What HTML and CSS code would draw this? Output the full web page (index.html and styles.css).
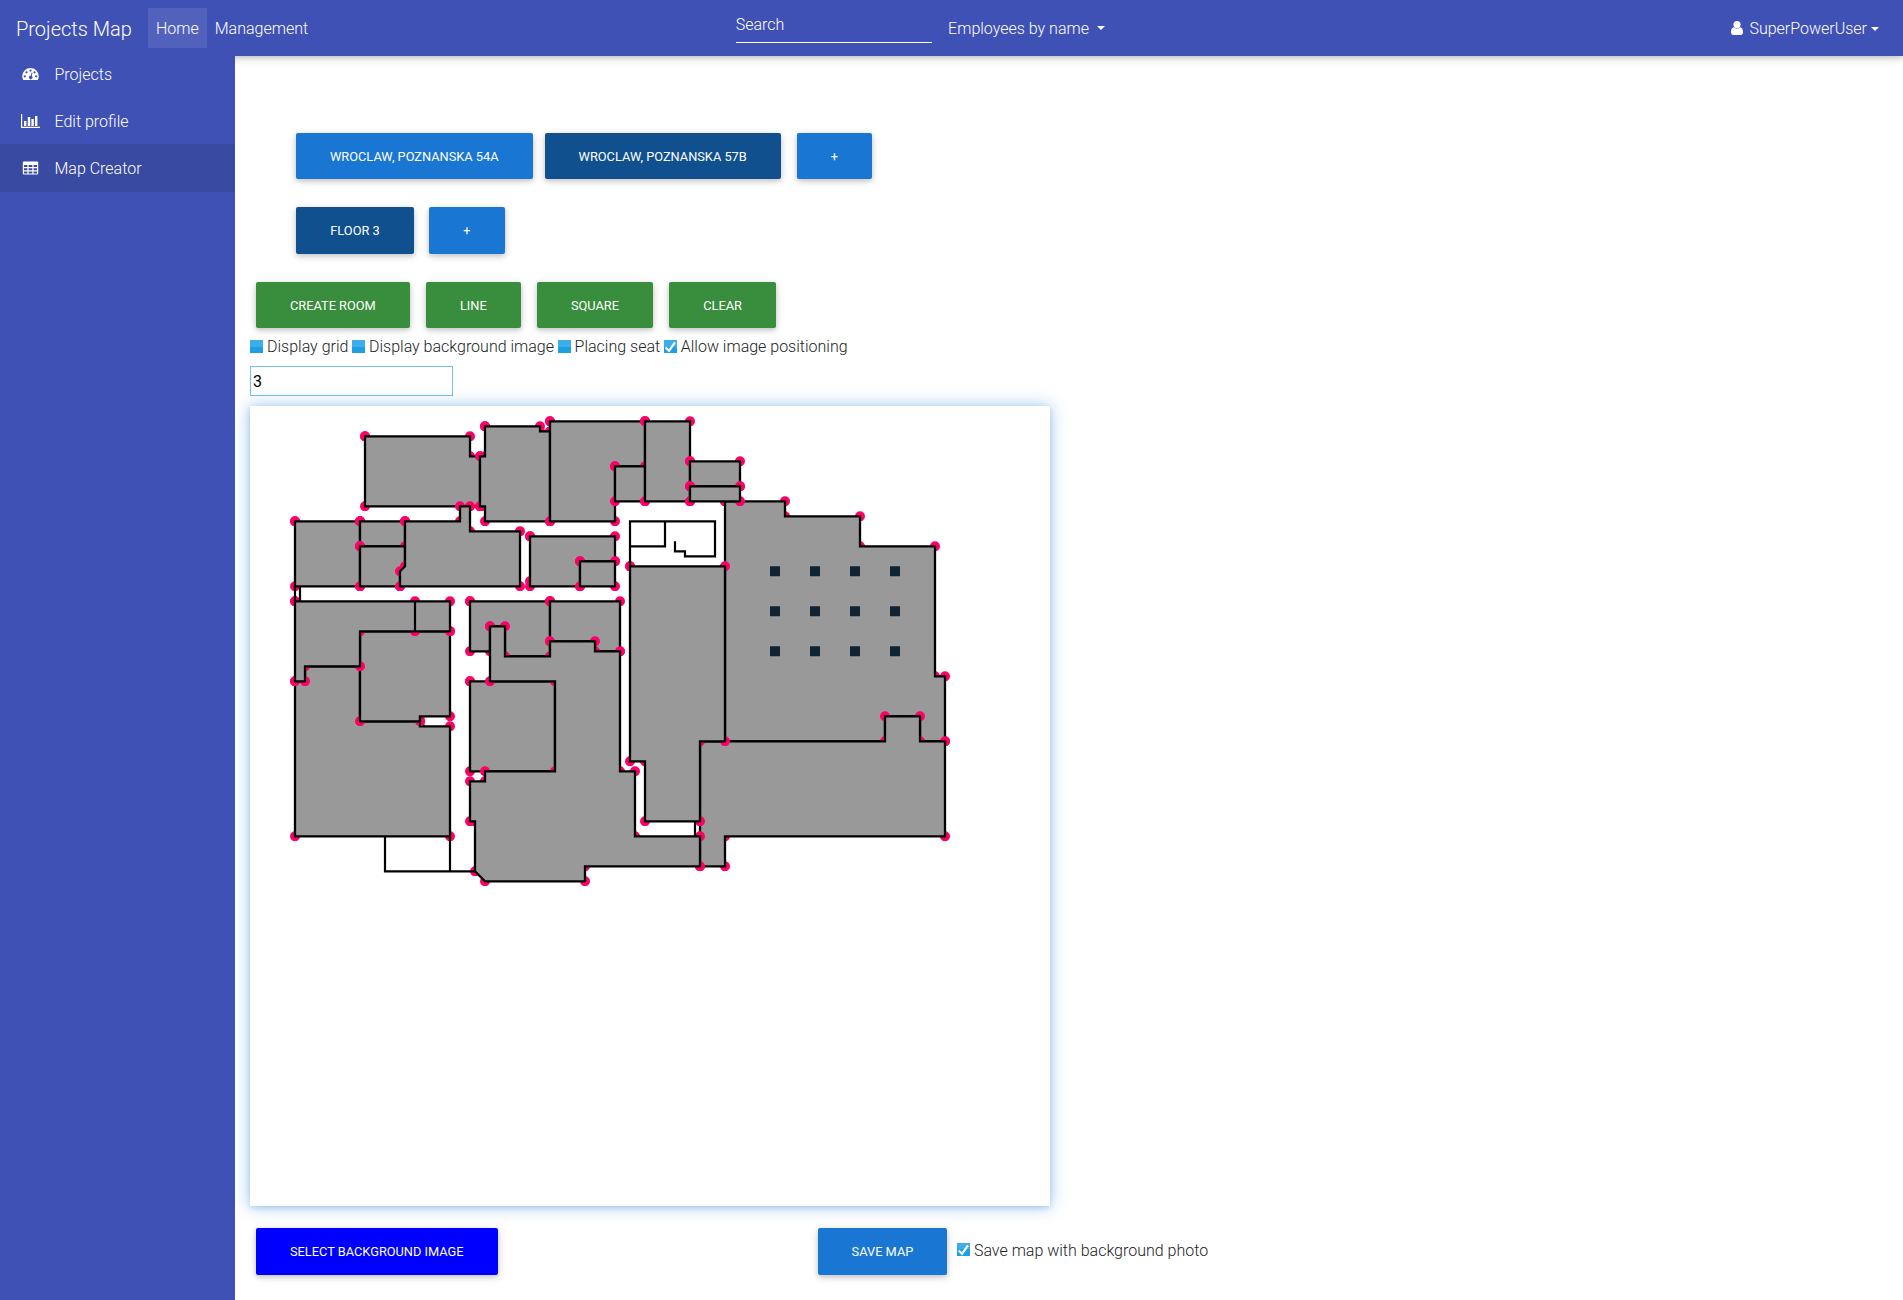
FILE: index.html
```html
<!DOCTYPE html>
<html lang="en">
<head>
<meta charset="utf-8">
<title>Projects Map</title>
<link rel="stylesheet" href="styles.css">
</head>
<body>
<nav class="navbar">
  <a class="brand">Projects Map</a>
  <a class="nav-link active">Home</a>
  <a class="nav-link">Management</a>
  <div class="search">Search</div>
  <a class="filter">Employees by name<span class="caret"></span></a>
  <a class="user"><svg class="user-icon" width="12" height="14" viewBox="0 0 12 14"><path d="M0 11.3C0 8.6.8 6.3 2.9 6.2 3.7 7 4.800 7.500 6 7.500S8.300 7 9.100 6.200C11.200 6.300 12 8.600 12 11.300 12 12.900 11 14 9.700 14H2.300C1 14 0 12.900 0 11.300Z"/><circle cx="6" cy="3.600" r="3.600"/></svg>SuperPowerUser<span class="caret"></span></a>
</nav>
<div class="page">
  <aside class="sidebar">
    <a class="item"><svg class="icon" width="18" height="14" viewBox="0 0 18 14"><path fill-rule="evenodd" d="M9 1a8.300 8.300 0 0 1 8.300 8.300c0 1.500-.4 2.700-1.100 3.700H1.800A7 7 0 0 1 .7 9.300 8.300 8.300 0 0 1 9 1ZM3.300 8.200a1.150 1.150 0 1 0 0 2.300 1.150 1.150 0 0 0 0-2.300ZM5 4.200a1.150 1.150 0 1 0 0 2.300 1.150 1.150 0 0 0 0-2.300ZM9 2.400a1.150 1.150 0 1 0 0 2.300 1.150 1.150 0 0 0 0-2.300ZM13 4.200a1.150 1.150 0 1 0 0 2.300 1.150 1.150 0 0 0 0-2.300ZM14.700 8.200a1.150 1.150 0 1 0 0 2.300 1.150 1.150 0 0 0 0-2.300ZM10.100 5.600 9.200 8.800a1.700 1.700 0 1 0 1 .300l.9-3.200Z"/></svg>Projects</a>
    <a class="item"><svg class="icon" width="19" height="14" viewBox="0 0 19 14"><path d="M0 0h1.200v12.800H19V14H0ZM3 7h2.400v5H3ZM6.800 3h2.400v9H6.800ZM10.400 5h2.400V12h-2.400ZM14 2h2.400v10H14Z"/></svg>Edit profile</a>
    <a class="item current"><svg class="icon" width="16" height="14" viewBox="0 0 16 14"><path fill-rule="evenodd" d="M1.500.5h13A1.200 1.200 0 0 1 15.700 1.700v10.600a1.200 1.200 0 0 1-1.200 1.200h-13A1.200 1.200 0 0 1 .3 12.300V1.700A1.200 1.200 0 0 1 1.500.5ZM1.500 4v2h3.400V4ZM6.100 4v2h3.700V4ZM11 4v2h3.500V4ZM1.500 7.200v2h3.400v-2ZM6.100 7.200v2h3.700v-2ZM11 7.200v2h3.500v-2ZM1.500 10.400v2h3.400v-2ZM6.100 10.400v2h3.700v-2ZM11 10.400v2h3.500v-2Z"/></svg>Map Creator</a>
  </aside>
  <main class="content">
    <div class="row buildings">
      <button class="btn">Wroclaw, Poznanska 54A</button>
      <button class="btn selected">Wroclaw, Poznanska 57B</button>
      <button class="btn plus">+</button>
    </div>
    <div class="row floors">
      <button class="btn selected">Floor 3</button>
      <button class="btn">+</button>
    </div>
    <div class="row tools">
      <button class="btn tool">Create room</button>
      <button class="btn tool">Line</button>
      <button class="btn tool">Square</button>
      <button class="btn tool">Clear</button>
    </div>
    <div class="options">
      <label class="option"><span class="check"></span>Display grid</label>
      <label class="option"><span class="check"></span>Display background image</label>
      <label class="option"><span class="check"></span>Placing seat</label>
      <label class="option"><span class="check"><svg width="13" height="13" viewBox="0 0 13 13"><path d="M1.600 7.500 5 10.800 11 2.400"/></svg></span>Allow image positioning</label>
    </div>
    <input class="floor-input" type="text" value="3">
    <div class="map">
      <svg width="800" height="800" viewBox="0 -.3 800 800">
        <defs>
          <marker id="dot" markerUnits="userSpaceOnUse" markerWidth="10" markerHeight="10" refX="5" refY="5"><circle class="vertex" cx="5" cy="5" r="5"/></marker>
        </defs>
        <g class="rooms">
          <polygon points="115,30 220,30 220,50 230,50 230,100 115,100"/>
          <polygon points="235,20 290,20 290,25 300,25 300,115 235,115 235,100 230,100 230,50 235,50"/>
          <polygon points="300,15 395,15 395,60 365,60 365,115 300,115"/>
          <polygon points="365,60 395,60 395,95 365,95"/>
          <polygon points="475,95 535,95 535,110 610,110 610,140 685,140 685,270 695,270 695,335 670,335 670,310 635,310 635,335 475,335"/>
          <polygon points="395,15 440,15 440,95 395,95"/>
          <polygon points="440,55 490,55 490,80 440,80"/>
          <polygon points="440,80 490,80 490,95 440,95"/>
          <polygon points="450,335 635,335 635,310 670,310 670,335 695,335 695,430 475,430 475,460 450,460"/>
          <polygon points="380,160 475,160 475,335 450,335 450,415 395,415 395,355 380,355"/>
          <polygon points="45,115 110,115 110,180 45,180"/>
          <polygon points="110,115 155,115 155,140 110,140"/>
          <polygon points="110,140 155,140 155,160 150,165 150,180 110,180"/>
          <polygon points="155,115 210,115 210,100 220,100 220,125 270,125 270,180 150,180 150,165 155,160"/>
          <polygon points="280,130 365,130 365,155 330,155 330,180 280,180 280,175"/>
          <polygon points="330,155 365,155 365,180 330,180"/>
          <polygon points="55,260 110,260 110,315 170,315 170,320 200,320 200,430 45,430 45,275 55,275"/>
          <polygon points="110,225 200,225 200,310 170,310 170,315 110,315"/>
          <polygon points="45,195 165,195 200,195 200,225 165,225 110,225 110,260 55,260 55,275 45,275"/>
          <polygon points="220,195 300,195 300,250 255,250 255,220 240,220 240,245 220,245"/>
          <polygon points="300,195 370,195 370,245 345,245 345,235 300,235"/>
          <polygon points="220,275 305,275 305,365 220,365"/>
          <polygon points="240,220 255,220 255,250 300,250 300,235 345,235 345,245 370,245 370,365 385,365 385,430 450,430 450,460 335,460 335,475 235,475 225,465 225,415 220,415 220,375 235,375 235,365 305,365 305,275 240,275"/>
        </g>
        <g class="walls">
          <path d="M165 195V225M170 310V320M380 160V115H465V150H435V145H425V135M415 115V140H380M445 415V430M45 180V195M50 180V195M135 430V465H225M200 430V465"/>
        </g>
        <g class="seats">
          <path d="M520 160h10v10h-10zM560 160h10v10h-10zM600 160h10v10h-10zM640 160h10v10h-10zM520 200h10v10h-10zM560 200h10v10h-10zM600 200h10v10h-10zM640 200h10v10h-10zM520 240h10v10h-10zM560 240h10v10h-10zM600 240h10v10h-10zM640 240h10v10h-10z"/>
        </g>
      </svg>
    </div>
    <div class="actions">
      <button class="btn image">Select background image</button>
      <button class="btn">Save map</button>
      <label class="option"><span class="check"><svg width="13" height="13" viewBox="0 0 13 13"><path d="M1.600 7.500 5 10.800 11 2.400"/></svg></span>Save map with background photo</label>
    </div>
  </main>
</div>
</body>
</html>
```
FILE: styles.css
```css
* { box-sizing: border-box; }
body {
  margin: 0;
  height: 1300px;
  overflow: hidden;
  background: #fff;
  color: #212324;
  font: 300 16px/24px Roboto, "Liberation Sans", sans-serif;
}
.navbar {
  display: flex;
  align-items: center;
  height: 56px;
  padding-left: 16px;
  padding-right: 24px;
  background: #3f51b5;
  color: #fff;
  box-shadow: 0 2px 5px rgba(0,0,0,.16), 0 2px 10px rgba(0,0,0,.12);
}
.brand { width: 132px; font-size: 20px; padding-top: 2px; }
.nav-link { padding: 9px 8px 7px; height: 40px; }
.nav-link.active { background: rgba(255,255,255,.1); }
.search {
  width: 196px;
  height: 30px;
  margin: 0 16.400px 0 419.600px;
  border-bottom: 1px solid #fff;
}
.caret {
  display: inline-block;
  margin-left: 8px;
  vertical-align: 4px;
  border: 4.500px solid transparent;
  border-top-color: #fff;
  border-bottom: 0;
}
.filter { padding-top: 2px; }
.user { margin-left: auto; display: flex; align-items: center; padding-top: 2px; }
.user .caret { margin-left: 4px; }
.user-icon { fill: #fff; margin: -2px 6px 0 0; }
.page { display: flex; height: 1244px; }
.sidebar {
  position: relative;
  flex: none;
  width: 235px;
  margin-top: -6px;
  height: 1250px;
  background: #3f51b5;
  clip-path: inset(6px 0 0 0);
}
.item {
  display: flex;
  align-items: center;
  height: 48px;
  margin-bottom: -1px;
  padding-top: 2px;
  color: #fff;
}
.item.current { background: #394aa2; }
.icon { width: 19px; margin: -2px 14.500px 0 21px; fill: #fff; }
.content { flex: 1; padding-left: 15px; }
.row { display: flex; height: 47px; }
.buildings { margin: 77px 0 0 46px; }
.buildings .btn + .btn { margin-left: 12px; }
.buildings .btn.plus { margin-left: 16px; }
.floors { margin: 27px 0 0 46px; }
.floors .btn { height: 47px; padding: 0 34.300px; }
.floors .btn + .btn { margin-left: 15px; }
.tools { margin: 28px 0 0 6px; gap: 16.200px; }
.btn {
  height: 46.400px;
  padding: 0 34px;
  border: 0;
  border-radius: 2px;
  background: #1976d2;
  color: #fff;
  font: 400 12.800px/19px Roboto, "Liberation Sans", sans-serif;
  text-transform: uppercase;
  white-space: nowrap;
  box-shadow: 0 2px 5px rgba(0,0,0,.16), 0 2px 10px rgba(0,0,0,.12);
}
.btn.selected { background: #10508f; }
.btn.tool { background: #388e3c; }
.btn.image { background: #00f; }
.options { display: flex; gap: 3.600px; margin-top: 6px; height: 24px; }
.option { display: flex; align-items: center; white-space: nowrap; }
.check {
  width: 13px;
  height: 13px;
  margin-right: 4px;
  background: linear-gradient(#3daee9 50%, #1c9fe3 50%);
  position: relative;
  top: -1px;
}
.check svg { display: block; fill: none; stroke: #fff; stroke-width: 2.200; }
.floor-input {
  display: block;
  width: 203px;
  height: 30px;
  margin: 7px 0 10px;
  padding: 1px 2px;
  border: 1px solid #76c1e8;
  background: #fff;
  color: #000;
  font: 400 16px Roboto, "Liberation Sans", sans-serif;
}
.map {
  width: 800px;
  height: 800px;
  background: #fff;
  box-shadow: 0 2px 5px rgba(25,118,210,.2), 0 0 16px rgba(25,118,210,.42);
}
.map svg { display: block; }
.rooms polygon {
  fill: #999;
  stroke: #000;
  stroke-width: 2.300;
  paint-order: markers fill stroke;
  marker: url(#dot);
}
.vertex { fill: #ff0068; }
.walls path { fill: none; stroke: #000; stroke-width: 2.200; }
.seats path { fill: #122333; }
.actions { display: flex; margin: 22px 0 0 6px; align-items: center; }
.actions .btn { height: 47px; }
.actions .image { margin-right: 320px; }
.actions .option { margin: -2px 0 0 9.600px; }
```
